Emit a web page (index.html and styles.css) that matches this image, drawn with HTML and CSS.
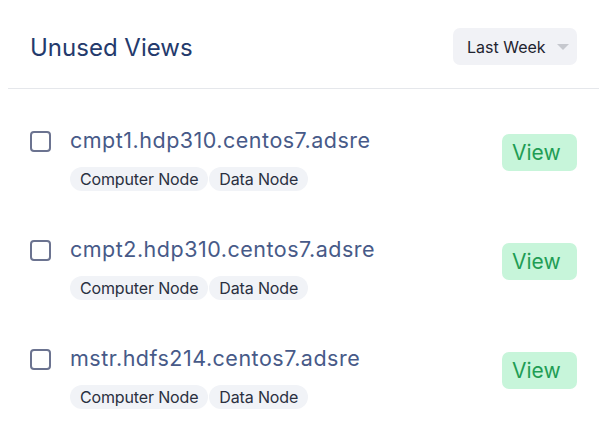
FILE: index.html
```html
<!DOCTYPE html>
<html>
<head>
<meta charset="utf-8">
<link rel="stylesheet" href="styles.css">
</head>
<body>
<div class="panel">
  <div class="header">
    <h1 class="title">Unused Views</h1>
    <div class="dropdown">
      <span class="dropdown-label">Last Week</span>
      <span class="caret"></span>
    </div>
  </div>
  <div class="list">
    <div class="row">
      <span class="checkbox"></span>
      <div class="info">
        <div class="host">cmpt1.hdp310.centos7.adsre</div>
        <div class="tags"><span class="tag">Computer Node</span><span class="tag">Data Node</span></div>
      </div>
      <button class="view">View</button>
    </div>
    <div class="row">
      <span class="checkbox"></span>
      <div class="info">
        <div class="host">cmpt2.hdp310.centos7.adsre</div>
        <div class="tags"><span class="tag">Computer Node</span><span class="tag">Data Node</span></div>
      </div>
      <button class="view">View</button>
    </div>
    <div class="row">
      <span class="checkbox"></span>
      <div class="info">
        <div class="host">mstr.hdfs214.centos7.adsre</div>
        <div class="tags"><span class="tag">Computer Node</span><span class="tag">Data Node</span></div>
      </div>
      <button class="view">View</button>
    </div>
  </div>
</div>
</body>
</html>
```
FILE: styles.css
```css
* { box-sizing: border-box; }
html, body { margin: 0; background: #ffffff; }
body { font-family: Inter, "Noto Sans", sans-serif; }
.panel { padding: 0 8px; }
.header {
  height: 89px;
  display: flex;
  align-items: flex-start;
  justify-content: space-between;
  padding: 28px 22px 0 22px;
  border-bottom: 1px solid #e5e7eb;
}
.title {
  margin: 6px 0 0 0;
  font-size: 24px;
  line-height: 28px;
  font-weight: 400;
  color: #243a6c;
}
.dropdown {
  height: 37px;
  width: 124px;
  background: #f1f2f6;
  border-radius: 7px;
  display: flex;
  align-items: center;
  padding-left: 14px;
  gap: 11px;
}
.dropdown-label {
  font-size: 16px;
  color: #1f2430;
}
.caret {
  width: 0; height: 0;
  border-left: 6px solid transparent;
  border-right: 6px solid transparent;
  border-top: 6px solid #c6c8ce;
  margin-top: 1px;
}
.list { padding-top: 37px; }
.row {
  display: flex;
  align-items: flex-start;
  padding: 0 22px;
  height: 109px;
}
.checkbox {
  flex: none;
  width: 21px; height: 21px;
  border: 2px solid #6b7390;
  border-radius: 4px;
  margin-top: 5px;
  margin-right: 19px;
}
.info { flex: 1; }
.host {
  font-size: 21.5px;
  line-height: 28px;
  letter-spacing: 0.5px;
  color: #475a88;
}
.tags { display: flex; gap: 1px; margin-top: 13px; }
.tag {
  height: 24px;
  line-height: 24px;
  padding: 0 10px;
  font-size: 16px;
  color: #2a3040;
  background: #f1f3f7;
  border-radius: 12px;
  letter-spacing: -0.15px;
}
.view {
  flex: none;
  width: 75px;
  height: 37px;
  margin-top: 8px;
  border: 0;
  border-radius: 7px;
  background: #c7f5da;
  color: #1f9d55;
  font-family: Inter, "Noto Sans", sans-serif;
  font-size: 21px;
  text-align: left;
  padding: 0 0 0 10px;
}
```
